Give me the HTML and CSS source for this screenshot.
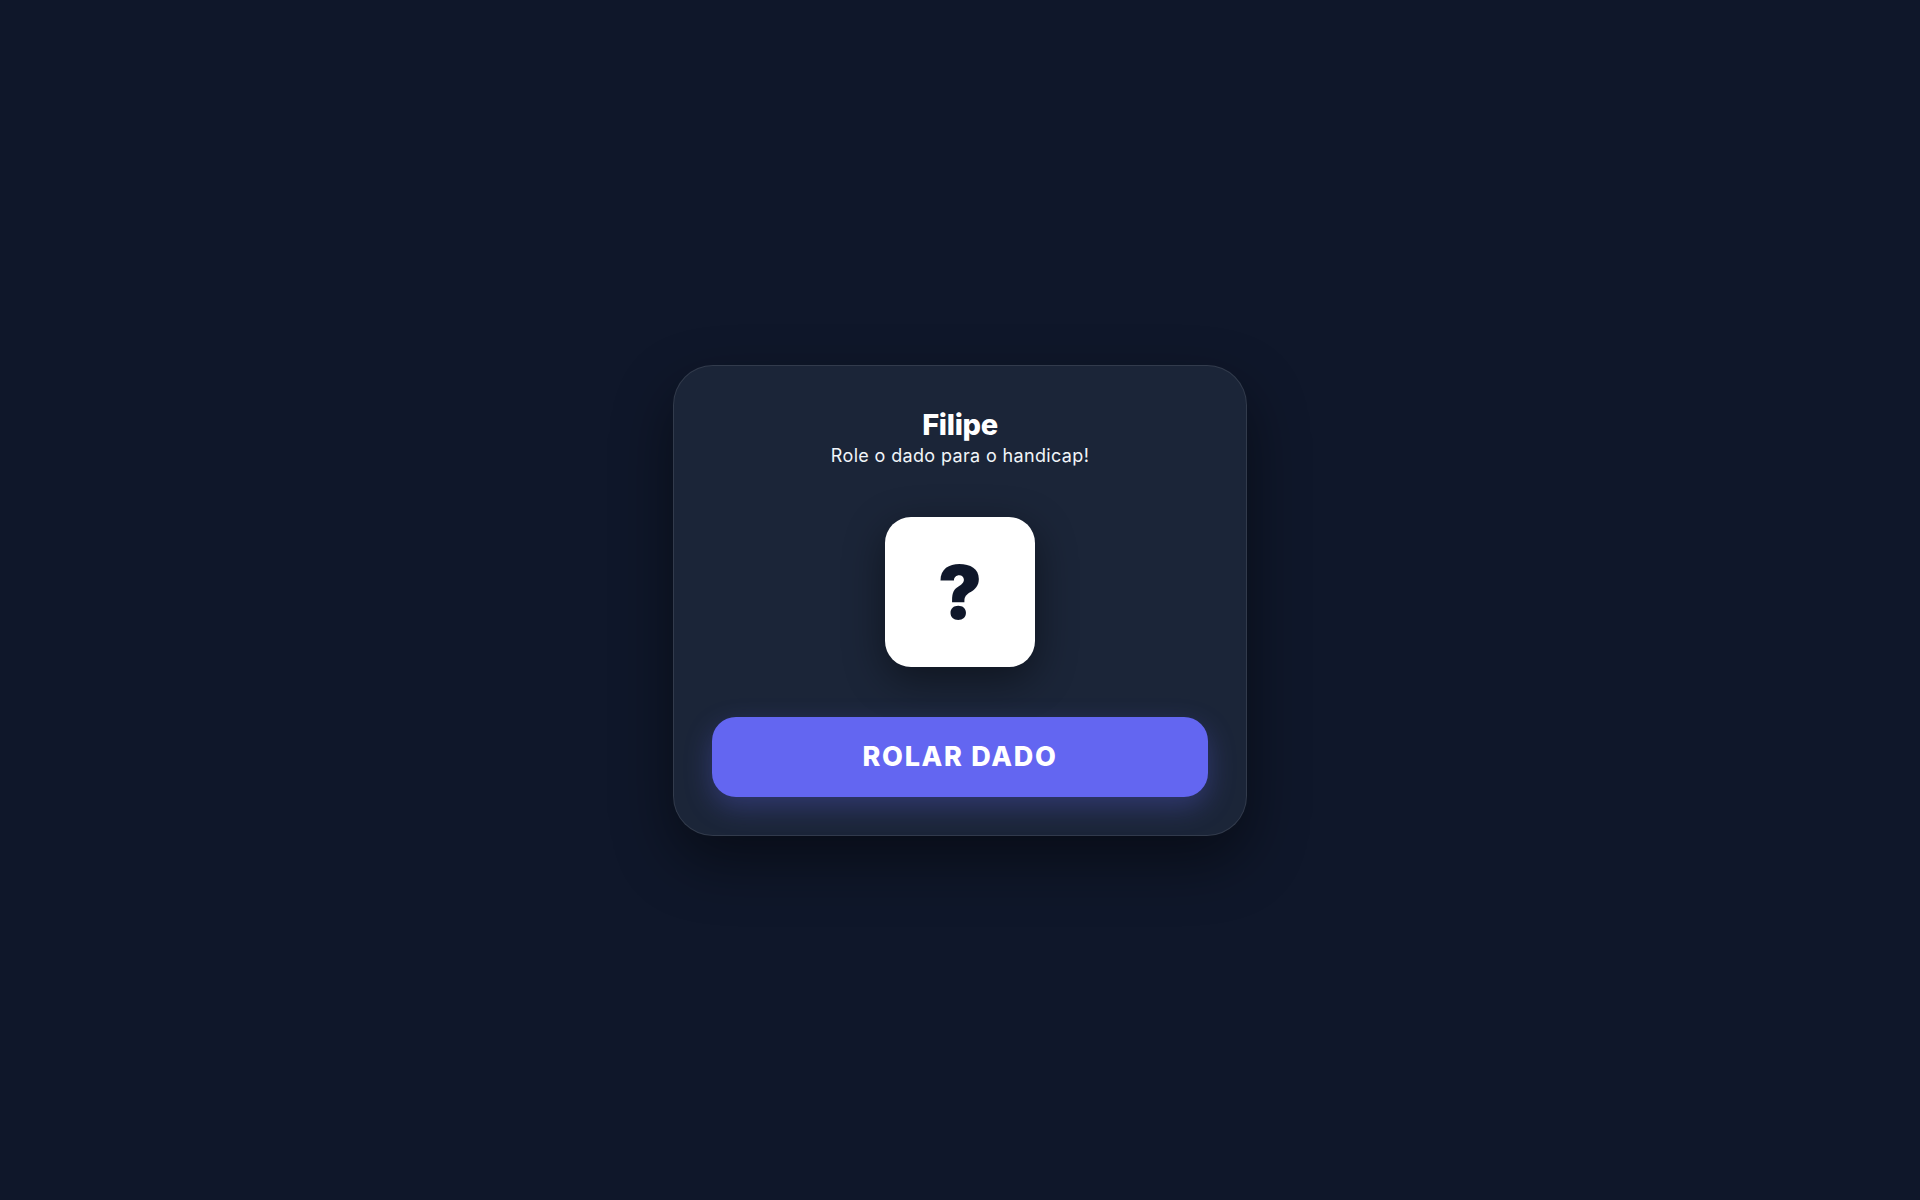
FILE: index.html
```html
<!DOCTYPE html>
<html lang="pt-BR">
<head>
    <meta charset="UTF-8">
    <meta name="viewport" content="width=device-width, initial-scale=1.0">
    <title>Handicap - Rolar Dado</title>
    <link rel="stylesheet" href="styles.css">
</head>
<body>
    <div class="dice-card">
        <div class="player-info">
            <h1 class="player-name">Filipe</h1>
            <p class="player-hint">Role o dado para o handicap!</p>
        </div>
        <div class="dice-area">
            <div class="dice" id="dice">?</div>
        </div>
        <button class="roll-button" id="rollButton">ROLAR DADO</button>
    </div>
</body>
</html>
```

FILE: styles.css
```css
* {
    box-sizing: border-box;
}
body {
    font-family: Inter, "Noto Sans", sans-serif;
    margin: 0;
    padding: 0;
    display: flex;
    justify-content: center;
    align-items: center;
    min-height: 100vh;
    background: #0f172a;
    color: #fff;
}
.dice-card {
    width: 574px;
    padding: 38px;
    background: #1b2538;
    border: 1px solid rgba(255, 255, 255, 0.1);
    border-radius: 40px;
    box-shadow: 0 25px 60px rgba(0, 0, 0, 0.45);
    display: flex;
    flex-direction: column;
    align-items: center;
}
.player-info {
    text-align: center;
    margin-top: 3px;
}
.player-name {
    margin: 0;
    font-size: 29px;
    font-weight: 800;
    line-height: 36px;
    letter-spacing: -0.3px;
}
.player-hint {
    margin: 0;
    font-size: 18px;
    line-height: 26px;
    letter-spacing: 0.35px;
    color: #f1f5f9;
}
.dice-area {
    margin-top: 48px;
    margin-bottom: 50px;
}
.dice {
    width: 150px;
    height: 150px;
    background: #fff;
    border-radius: 26px;
    display: flex;
    justify-content: center;
    align-items: center;
    padding-top: 1px;
    color: #0f172a;
    font-size: 74px;
    font-weight: 900;
    line-height: 1;
    box-shadow: 0 12px 40px rgba(0, 0, 0, 0.45);
}
.roll-button {
    width: 100%;
    height: 80px;
    border: none;
    border-radius: 24px;
    background: #6366f1;
    color: #fff;
    font-family: inherit;
    font-size: 27px;
    font-weight: 800;
    letter-spacing: 1.7px;
    cursor: pointer;
    box-shadow: 0 10px 28px rgba(99, 102, 241, 0.3);
}
.roll-button:hover {
    background: #5558e8;
}
```
